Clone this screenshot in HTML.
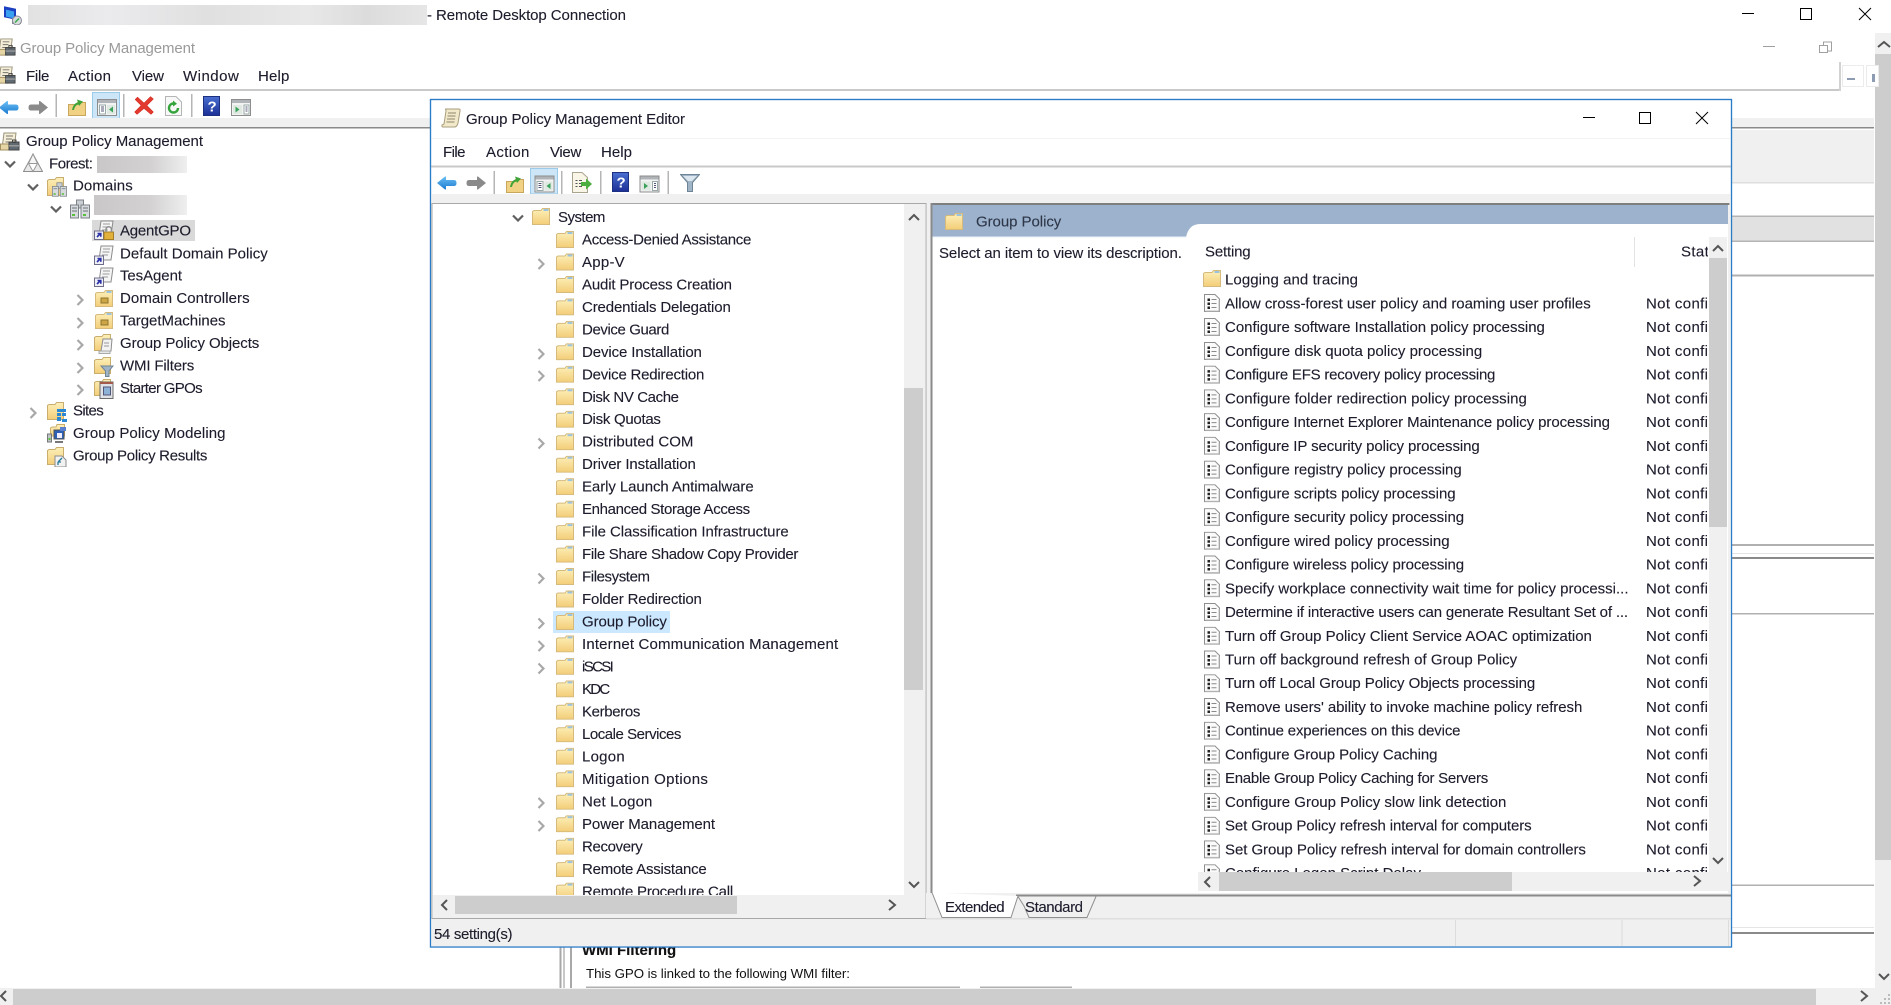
<!DOCTYPE html>
<html><head><meta charset="utf-8"><title>Remote Desktop Connection</title>
<style>
html,body{margin:0;padding:0;background:#fff;overflow:hidden;width:1891px;height:1005px}
svg{display:block;position:absolute;left:0;top:0}
text{font-family:"Liberation Sans",sans-serif;font-size:15px;fill:#1c1c2c;stroke:#1c1c2c;stroke-width:.12px;white-space:pre}
.n{letter-spacing:.35px}
#all{filter:blur(.3px)}
</style></head><body>
<svg width="1891" height="1005" viewBox="0 0 1891 1005" xmlns="http://www.w3.org/2000/svg">
<defs>
<linearGradient id="g1" x1="0" y1="0" x2="0" y2="1"><stop offset="0" stop-color="#fdf0ba"/><stop offset="1" stop-color="#f3cd78"/></linearGradient>
<linearGradient id="gb" x1="0" y1="0" x2="0" y2="1"><stop offset="0" stop-color="#6cc0f5"/><stop offset="1" stop-color="#1b7bd0"/></linearGradient>
<linearGradient id="gh" x1="0" y1="0" x2="0" y2="1"><stop offset="0" stop-color="#4a6fd0"/><stop offset="1" stop-color="#1b2f96"/></linearGradient>
<linearGradient id="bl1" x1="0" y1="0" x2="1" y2="0"><stop offset="0" stop-color="#e2e2e2"/><stop offset=".2" stop-color="#ebebee"/><stop offset=".45" stop-color="#e0e0e0"/><stop offset=".7" stop-color="#e8e8e8"/><stop offset=".85" stop-color="#dcdcdc"/><stop offset="1" stop-color="#e6e6e6"/></linearGradient>
<linearGradient id="bl2" x1="0" y1="0" x2="1" y2="0"><stop offset="0" stop-color="#c9c7c7"/><stop offset=".6" stop-color="#d3d1d1"/><stop offset="1" stop-color="#efefef"/></linearGradient>
<clipPath id="cl"><rect x="433" y="204" width="471" height="691"/></clipPath>
<clipPath id="cr"><rect x="1198" y="268" width="511" height="604"/></clipPath>
<clipPath id="cs"><rect x="1640" y="237" width="68" height="635"/></clipPath>

<symbol id="f" viewBox="0 0 18 17"><path d="M.5 16.500V3.500L2 2.500H9L10.500 .5H17.500V16.500Z" fill="url(#g1)" stroke="#d6ba7c"/><rect x="11.500" y="1" width="5" height="2" fill="#9cc3dd"/></symbol>
<symbol id="d" viewBox="0 0 16 18"><path d="M.5 .5H11L15.500 5V17.500H.5Z" fill="#fbfbfb" stroke="#8e8e8e"/><path d="M15 6V17H1.500" fill="none" stroke="#bdbdbd"/><path d="M3.500 4.500h2.500v2.500h-2.500zM3.500 8.500h2.500v2.500h-2.500zM3.500 12.500h2.500v2.500h-2.500z" fill="#222"/><path d="M7.500 5.500h5M7.500 9.500h5M7.500 13.500h5" stroke="#8a8a8a" fill="none"/></symbol>
<symbol id="r" viewBox="0 0 8 12"><path d="M1.500 1L6.500 6L1.500 11" fill="none" stroke="#a8a8a8" stroke-width="2.200"/></symbol>
<symbol id="e" viewBox="0 0 12 8"><path d="M1 1.500L6 6.500L11 1.500" fill="none" stroke="#606060" stroke-width="2.200"/></symbol>
<symbol id="back" viewBox="0 0 20 16"><path d="M0 8L8 1.500Q9 1 9 2.500V5H17Q19.500 5 19.500 8Q19.500 11 17 11H9V13.500Q9 15 8 14.500Z" fill="url(#gb)"/></symbol>
<symbol id="fwd" viewBox="0 0 20 16"><path d="M20 8L12 1.500Q11 1 11 2.500V5H3Q.5 5 .5 8Q.5 11 3 11H11V13.500Q11 15 12 14.500Z" fill="#8a8a8a"/></symbol>
<symbol id="upf" viewBox="0 0 18 18"><path d="M.5 17.500V6.500H8L9.500 4.500H17.500V17.500Z" fill="#f1d184" stroke="#c8a75c"/><path d="M4 12C5 7 7 5 10 4.500L9 1.500L15 3.500L11 8L10.500 6.500C8 7 6.500 9 6 12Z" fill="#3fa43a"/></symbol>
<symbol id="tree" viewBox="0 0 20 17"><rect x=".5" y=".5" width="19" height="16" fill="#f3f3f3" stroke="#8d8d8d"/><rect x="1" y="1" width="18" height="3" fill="#b0b4b8"/><rect x="2.500" y="6" width="6" height="9" fill="#fff" stroke="#9aa"/><path d="M4 8h3M4 10h3M4 12h3" stroke="#557"/><rect x="10" y="6" width="8" height="9" fill="#dfe9e2"/><path d="M16 7.500V13.500L12 10.500Z" fill="#3aa15a"/></symbol>
<symbol id="pane" viewBox="0 0 20 17"><rect x=".5" y=".5" width="19" height="16" fill="#f3f3f3" stroke="#8d8d8d"/><rect x="1" y="1" width="18" height="3" fill="#b0b4b8"/><rect x="2" y="6" width="9" height="9" fill="#dfe9e2"/><path d="M4.500 7.500V13.500L8.500 10.500Z" fill="#3aa15a"/><rect x="13" y="6" width="5" height="9" fill="#fff" stroke="#9aa"/><path d="M14.500 8h2M14.500 10h2M14.500 12h2" stroke="#557"/></symbol>
<symbol id="x" viewBox="0 0 20 19"><path d="M1 3.500L3.500 1L10 7L16.500 .5L19.500 3L13 9.500L19.500 16L17 18.500L10 12.500L3 18.500L.5 16L7 9.500Z" fill="#e23a2e" stroke="#c92820" stroke-width=".5"/></symbol>
<symbol id="ref" viewBox="0 0 17 20"><path d="M.5 .5H11L16.500 6V19.500H.5Z" fill="#f8f8f8" stroke="#b5b5b5"/><path d="M13 12A4.500 4.500 0 1 1 8.500 7.500" fill="none" stroke="#33a33a" stroke-width="2.400"/><path d="M8 4.500L12 7.800L8 10.500Z" fill="#33a33a"/></symbol>
<symbol id="help" viewBox="0 0 17 20"><rect x=".5" y=".5" width="16" height="19" fill="url(#gh)" stroke="#1d2f80"/><text x="4.500" y="15.500" style="font-size:15px;font-weight:bold;fill:#fff;stroke:none">?</text></symbol>
<symbol id="exp" viewBox="0 0 20 21"><path d="M.5 .5H10L15.500 5.500V20.500H.5Z" fill="#f9f6e8" stroke="#a9a48f"/><path d="M3.500 8.500h2M7 8.500h3M3.500 11.500h2M7 11.500h3M3.500 14.500h2M7 14.500h3" stroke="#555"/><path d="M9 10h5V6.500L20 12L14 17.500V14H9Z" fill="#4cae3e"/></symbol>
<symbol id="fil" viewBox="0 0 20 18"><path d="M.5 .5H19.500L12.500 8.500V17.500H7.500V8.500Z" fill="#9fb4c6" stroke="#6f8494"/><path d="M3 2H17L12 7H8Z" fill="#dce6ee"/></symbol>
<symbol id="gpm" viewBox="0 0 20 20"><path d="M4 1H16L14.500 13H2.500Z" fill="#f5efd9" stroke="#9a937c"/><path d="M6 4h7M6 7h6M5.500 10h4" stroke="#77756a"/><rect x=".5" y="12" width="11" height="6" fill="#e6d6a6" stroke="#a29060"/><rect x="9" y="10" width="10" height="8" fill="#5f6a72" stroke="#444"/><rect x="12.500" y="8" width="3.500" height="2.500" fill="none" stroke="#444"/><rect x="9" y="13" width="10" height="1.500" fill="#999"/></symbol>
<symbol id="for" viewBox="0 0 20 20"><path d="M10 1L19.500 18.500H.5Z" fill="#e9e9e9" stroke="#8e8e8e"/><path d="M5.500 10.500H14.500L10 18.500Z" fill="#fff" stroke="#9a9a9a"/><path d="M10 1L5.500 10.500H14.500Z" fill="#f6f6f6" stroke="#9a9a9a"/></symbol>
<symbol id="srv" viewBox="0 0 20 20"><rect x="6.500" y="1" width="7" height="8" fill="#c9ced2" stroke="#7a8288"/><rect x=".5" y="6" width="8" height="13" fill="#d7dbde" stroke="#7a8288"/><rect x="11" y="6" width="8.500" height="13" fill="#d7dbde" stroke="#7a8288"/><path d="M2 9h5M2 12h5M13 9h5M13 12h5" stroke="#6c7378"/><path d="M2 16h3M13 16h3" stroke="#5bbf3e" stroke-width="2"/></symbol>
<symbol id="dom" viewBox="0 0 20 20"><path d="M.5 18.500V3.500L2 2.500H8L9.500 .5H16.500V18.500Z" fill="url(#g1)" stroke="#c9ad6d"/><g transform="translate(5 5) scale(.75)"><rect x="6.500" y="1" width="7" height="8" fill="#c9ced2" stroke="#7a8288"/><rect x=".5" y="6" width="8" height="13" fill="#d7dbde" stroke="#7a8288"/><rect x="11" y="6" width="8.500" height="13" fill="#d7dbde" stroke="#7a8288"/><path d="M2 9h5M13 9h5" stroke="#6c7378"/><path d="M2 16h3M13 16h3" stroke="#5bbf3e" stroke-width="2"/></g></symbol>
<symbol id="gpo" viewBox="0 0 20 20"><path d="M7 1H19L17 15H5Z" fill="#f5f5f5" stroke="#8d8d8d"/><path d="M9 4h7M8.500 7h7M8 10h6" stroke="#9a9a9a"/><rect x=".5" y="11" width="9" height="8.500" fill="#eef0f5" stroke="#6d6d8a"/><path d="M3 17L6.500 13.500M3.500 13.500H6.800V16.800" stroke="#2a2fa8" stroke-width="1.600" fill="none"/></symbol>
<symbol id="gpol" viewBox="0 0 20 20"><use href="#gpo" width="20" height="20"/><rect x="10" y="12" width="9.500" height="7.500" fill="#e2b13c" stroke="#a57d22"/><path d="M12 12V9.500a2.700 2.700 0 0 1 5.400 0V12" fill="none" stroke="#8f8f8f" stroke-width="1.500"/></symbol>
<symbol id="ou" viewBox="0 0 18 17"><use href="#f" width="18" height="17"/><rect x="6" y="8" width="7" height="5" fill="#cda544" stroke="#8f7530"/></symbol>
<symbol id="gpf" viewBox="0 0 20 20"><path d="M.5 16.500V3.500L2 2.500H8L9.500 .5H16.500V16.500Z" fill="url(#g1)" stroke="#c9ad6d"/><path d="M9 5H18L17 17H7Z" fill="#f3f3f3" stroke="#8d8d8d"/><path d="M10 9h5M10 12h5" stroke="#999"/><path d="M5 17H16V19.500H5Z" fill="#e8e8e8" stroke="#aaa"/></symbol>
<symbol id="wmi" viewBox="0 0 20 20"><path d="M.5 16.500V3.500L2 2.500H8L9.500 .5H16.500V16.500Z" fill="url(#g1)" stroke="#c9ad6d"/><path d="M7 9H19L15 14V19.500H11.500V14Z" fill="#9fb4c6" stroke="#6f8494"/></symbol>
<symbol id="sta" viewBox="0 0 20 20"><path d="M.5 16.500V3.500L2 2.500H8L9.500 .5H16.500V16.500Z" fill="url(#g1)" stroke="#c9ad6d"/><rect x="6" y="3" width="13" height="16.500" fill="#dfe3e8" stroke="#6c6c6c"/><rect x="6" y="3" width="13" height="2" fill="#a65a4a"/><rect x="9.500" y="8" width="7" height="8" fill="#8db2d8" stroke="#557"/></symbol>
<symbol id="sit" viewBox="0 0 20 20"><path d="M.5 17.500V3.500L2 2.500H8L9.500 .5H16.500V17.500Z" fill="url(#g1)" stroke="#c9ad6d"/><path d="M10 7h9v3h-9zM10 11h4v3h-4zM15 11h4v3h-4zM10 15h4v4h-4zM15 17h5v3h-5z" fill="#2a88d4"/></symbol>
<symbol id="mod" viewBox="0 0 20 20"><path d="M3.500 14V4L5 3H9L10 .5H17.500V12H3.500Z" fill="url(#g1)" stroke="#c9ad6d"/><rect x=".5" y="10" width="4" height="8" fill="#bfc4c8" stroke="#777"/><rect x="7" y="6" width="10" height="9" fill="#2b5fb8" stroke="#555"/><rect x="10" y="9" width="5" height="5" fill="#eef"/><path d="M8 18h8" stroke="#777" stroke-width="2"/><rect x="13" y="3" width="6" height="4" fill="#5a7fcf"/><rect x="1.500" y="14" width="2" height="2" fill="#5bbf3e"/></symbol>
<symbol id="res" viewBox="0 0 20 20"><path d="M.5 17.500V3.500L2 2.500H8L9.500 .5H16.500V17.500Z" fill="url(#g1)" stroke="#c9ad6d"/><path d="M8 9H15L19 13V20H8Z" fill="#f1f1f1" stroke="#8d8d8d"/><path d="M11 15L15 11M11 15H14M11 15V18" stroke="#2a7a9a" fill="none" stroke-width="1.300"/></symbol>
<symbol id="ed" viewBox="0 0 20 20"><path d="M4 1H18Q19.500 1 19 3L17 15Q16.500 18 14 19H2Q.5 19 1 17L3 16L5 3Q5 1 4 1Z" fill="#f2e9cb" stroke="#a99e7c"/><path d="M7 5h8M6.500 8h8M6 11h8M5.500 14h8" stroke="#8d856a"/></symbol>
<symbol id="rdp" viewBox="0 0 20 20"><rect x="1" y="1" width="12" height="11" fill="#1a3fc0" transform="skewY(12)"/><rect x="3" y="4" width="8" height="7" fill="#3aa0f0" transform="skewY(12)"/><rect x="9" y="13" width="9" height="6" fill="#8a8f94"/><circle cx="14" cy="15.500" r="4.500" fill="#d8dcdc" stroke="#889"/><path d="M12 17.500L16 13.500" stroke="#3aa84a" stroke-width="1.500"/></symbol>
</defs>

<g id="all">
<!-- Outer title bar -->
<use href="#rdp" x="3" y="5" width="20" height="20"/>
<rect x="28" y="5" width="399" height="20" fill="url(#bl1)"/>
<text x="427" y="20" textLength="199">- Remote Desktop Connection</text>
<path d="M1742 13.500h12M1800.500 8.500h11v11h-11zM1859 8l12 12M1871 8l-12 12" stroke="#000" fill="none" stroke-width="1"/>

<!-- Inner GPMC title -->
<use href="#gpm" x="-3" y="38" width="19" height="19"/>
<text x="20" y="53" textLength="175" style="fill:#9a9a9a;stroke:none">Group Policy Management</text>
<path d="M1763 46.500h12" stroke="#a0a0a0" stroke-width="1"/>
<path d="M1823.500 45.500v-3.500h8v9h-4M1819.500 45.500h8v7h-8z" stroke="#a0a0a0" fill="none"/>
<rect x="1875" y="33" width="16" height="955" fill="#f0f0f0"/>
<rect x="1875" y="54" width="16" height="806" fill="#cdcdcd"/>
<path d="M1878 47l6-5l6 5" fill="none" stroke="#555" stroke-width="2"/>
<path d="M1879 974l5 5l5-5" fill="none" stroke="#555" stroke-width="2"/>

<!-- Menu -->
<use href="#gpm" x="-3" y="66" width="19" height="19"/>
<text x="26" y="81" textLength="23.400">File</text><text x="68" y="81" textLength="43">Action</text><text x="132" y="81" textLength="32">View</text><text x="183" y="81" textLength="55.800">Window</text><text x="258" y="81" textLength="31.400">Help</text>
<rect x="0" y="89" width="1840" height="2" fill="#c9c9c9"/>
<rect x="1839" y="62" width="2" height="29" fill="#d2d2d2"/>
<rect x="1842.500" y="65.500" width="21" height="21" fill="#fff" stroke="#ececec"/>
<rect x="1847" y="78" width="8" height="2" fill="#8d9cb3"/>
<rect x="1866.500" y="65.500" width="12" height="21" fill="#fff" stroke="#ececec"/>
<rect x="1872" y="74" width="3" height="8" fill="#8d9cb3"/>

<!-- Main toolbar -->
<use href="#back" x="-1" y="99.500" width="20" height="16"/>
<use href="#fwd" x="28" y="99.500" width="20" height="16"/>
<rect x="55.500" y="94" width="1.500" height="23" fill="#b5b5b5"/>
<use href="#upf" x="68" y="98" width="18" height="18"/>
<rect x="92.500" y="92.500" width="27" height="26" fill="#cce6f8" stroke="#9ccbea"/>
<use href="#tree" x="97" y="99" width="20" height="17"/>
<rect x="123" y="94" width="1.500" height="23" fill="#b5b5b5"/>
<use href="#x" x="134" y="96" width="20" height="19"/>
<use href="#ref" x="165" y="96" width="17" height="20"/>
<rect x="191" y="94" width="1.500" height="23" fill="#b5b5b5"/>
<use href="#help" x="203" y="96" width="17" height="20"/>
<use href="#pane" x="231" y="99" width="20" height="17"/>
<rect x="0" y="118" width="1874" height="9" fill="#f0f0f0"/>
<rect x="0" y="127" width="1874" height="1.500" fill="#8a8a8a"/>

<!-- Main tree -->
<use href="#gpm" x="0" y="132" width="20" height="20"/>
<text x="26" y="146" textLength="177">Group Policy Management</text>
<use href="#e" x="4" y="160" width="12" height="8"/>
<use href="#for" x="23" y="153" width="20" height="20"/>
<text x="49" y="168.500" textLength="43.900">Forest:</text>
<rect x="97" y="156" width="90" height="17" fill="url(#bl2)"/>
<use href="#e" x="27" y="183" width="12" height="8"/>
<use href="#dom" x="47" y="177" width="20" height="20"/>
<text x="73" y="190.600" textLength="59.700">Domains</text>
<use href="#e" x="50" y="205" width="12" height="8"/>
<use href="#srv" x="70" y="199" width="20" height="20"/>
<rect x="94" y="195" width="93" height="20" fill="url(#bl2)"/>
<rect x="92" y="220" width="103" height="21" fill="#d9d9d9"/>
<use href="#gpol" x="94" y="220" width="20" height="20"/>
<text x="120" y="235.700" textLength="71">AgentGPO</text>
<use href="#gpo" x="94" y="245" width="20" height="20"/>
<text x="120" y="258.300" textLength="147.700">Default Domain Policy</text>
<use href="#gpo" x="94" y="267" width="20" height="20"/>
<text x="120" y="280.700" textLength="62">TesAgent</text>
<use href="#r" x="76" y="294" width="8" height="12"/><use href="#ou" x="95" y="290" width="18" height="17"/>
<text x="120" y="303.200" textLength="129.600">Domain Controllers</text>
<use href="#r" x="76" y="317" width="8" height="12"/><use href="#ou" x="95" y="312" width="18" height="17"/>
<text x="120" y="325.700" textLength="105.500">TargetMachines</text>
<use href="#r" x="76" y="339" width="8" height="12"/><use href="#gpf" x="94" y="334" width="20" height="20"/>
<text x="120" y="348.200" textLength="139.300">Group Policy Objects</text>
<use href="#r" x="76" y="362" width="8" height="12"/><use href="#wmi" x="94" y="357" width="20" height="20"/>
<text x="120" y="370.700" textLength="74.200">WMI Filters</text>
<use href="#r" x="76" y="384" width="8" height="12"/><use href="#sta" x="94" y="379" width="20" height="20"/>
<text x="120" y="393.200" textLength="82.600">Starter GPOs</text>
<use href="#r" x="29" y="407" width="8" height="12"/><use href="#sit" x="47" y="402" width="20" height="20"/>
<text x="73" y="415.700" textLength="30.700">Sites</text>
<use href="#mod" x="47" y="424" width="20" height="20"/>
<text x="73" y="438.200" textLength="152.500">Group Policy Modeling</text>
<use href="#res" x="47" y="447" width="20" height="20"/>
<text x="73" y="460.700" textLength="134.400">Group Policy Results</text>

<!-- Right background behind editor -->
<rect x="1732" y="130" width="142" height="52" fill="#f0f0f0"/>
<rect x="1732" y="182" width="142" height="1.500" fill="#dedede"/>
<rect x="1732" y="216" width="142" height="26" fill="#e1e1e1"/>
<rect x="1732" y="215.500" width="142" height="1.500" fill="#b5b5b5"/>
<rect x="1732" y="240.500" width="142" height="1.500" fill="#b5b5b5"/>
<rect x="1732" y="274.500" width="142" height="2" fill="#b0b0b0"/>
<rect x="1732" y="544" width="142" height="2" fill="#b0b0b0"/>
<rect x="1732" y="553" width="142" height="1" fill="#e5e5e5"/>
<rect x="1732" y="557" width="142" height="2" fill="#8a8a8a"/>
<rect x="1732" y="613" width="142" height="1.500" fill="#b0b0b0"/>
<rect x="1732" y="884.500" width="142" height="1.500" fill="#b0b0b0"/>
<rect x="1732" y="927" width="142" height="1" fill="#e5e5e5"/>
<rect x="1732" y="932" width="142" height="2" fill="#8a8a8a"/>

<!-- Under editor -->
<rect x="559.500" y="947" width="2" height="41" fill="#a8a8a8"/>
<rect x="563" y="947" width="2" height="41" fill="#c8c8c8"/>
<rect x="570" y="947" width="2" height="41" fill="#a8a8a8"/>
<text x="582" y="955" style="font-weight:bold;fill:#111">WMI Filtering</text>
<text x="586" y="978" textLength="264" style="font-size:13.300px;fill:#111;stroke:none">This GPO is linked to the following WMI filter:</text>
<rect x="586" y="986.500" width="374" height="1.500" fill="#b0b0b0"/>
<rect x="980" y="986.500" width="92" height="1.500" fill="#b0b0b0"/>

<!-- Outer h scrollbar -->
<rect x="0" y="988" width="1891" height="17" fill="#f0f0f0"/>
<rect x="13" y="989" width="1803" height="16" fill="#cdcdcd"/>
<path d="M6 991l-5 5l5 5" fill="none" stroke="#555" stroke-width="2"/>
<path d="M1861 991l6 5l-6 5" fill="none" stroke="#555" stroke-width="2"/>
<path d="M1888 994h2v2h-2zM1884 998h2v2h-2zM1888 998h2v2h-2zM1880 1002h2v2h-2zM1884 1002h2v2h-2zM1888 1002h2v2h-2z" fill="#bbb"/>

<!-- Editor window -->
<rect x="430.500" y="99.500" width="1301" height="847.500" fill="#fff" stroke="#2a7cc7" stroke-width="1.200"/>
<use href="#ed" x="441" y="108" width="20" height="20"/>
<text x="466" y="124" textLength="219">Group Policy Management Editor</text>
<path d="M1583 117.500h12M1639.500 112.500h11v11h-11zM1696 112l12 12M1708 112l-12 12" stroke="#000" fill="none"/>
<rect x="431" y="138" width="1300" height="1" fill="#f3f3f3"/>
<text x="443" y="157" textLength="22.500">File</text><text x="486" y="157" textLength="43.400">Action</text><text x="550" y="157" textLength="31.300">View</text><text x="601" y="157" textLength="31">Help</text>
<rect x="431" y="165.500" width="1300" height="2" fill="#c9c9c9"/>
<use href="#back" x="437" y="175" width="20" height="16"/>
<use href="#fwd" x="466" y="175" width="20" height="16"/>
<rect x="493.500" y="171" width="1.500" height="23" fill="#b5b5b5"/>
<use href="#upf" x="506" y="175" width="18" height="18"/>
<rect x="530.500" y="168.500" width="27" height="25.500" fill="#cce6f8" stroke="#9ccbea"/>
<use href="#tree" x="534.500" y="175.500" width="20" height="17"/>
<rect x="561" y="171" width="1.500" height="23" fill="#b5b5b5"/>
<use href="#exp" x="572" y="172" width="20" height="21"/>
<rect x="600" y="171" width="1.500" height="23" fill="#b5b5b5"/>
<use href="#help" x="612" y="172" width="17" height="20"/>
<use href="#pane" x="639.500" y="175.500" width="20" height="17"/>
<rect x="667.500" y="171" width="1.500" height="23" fill="#b5b5b5"/>
<use href="#fil" x="680" y="174" width="20" height="18"/>
<rect x="431" y="194" width="1300" height="9" fill="#f0f0f0"/>

<!-- Left pane -->
<rect x="431" y="203" width="500" height="744" fill="#f0f0f0"/>
<rect x="432" y="203.500" width="494" height="715" fill="#fff" stroke="#a8a8a8"/>
<rect x="904" y="204" width="21" height="691" fill="#f0f0f0"/>
<rect x="904" y="388" width="19" height="302" fill="#cdcdcd"/>
<path d="M909 220l5-5l5 5" fill="none" stroke="#555" stroke-width="2"/>
<path d="M909 882l5 5l5-5" fill="none" stroke="#555" stroke-width="2"/>
<rect x="433" y="895" width="492" height="23" fill="#f0f0f0"/>
<rect x="455" y="896" width="282" height="18" fill="#cdcdcd"/>
<path d="M447 900l-5 5l5 5" fill="none" stroke="#555" stroke-width="2"/>
<path d="M889 900l6 5l-6 5" fill="none" stroke="#555" stroke-width="2"/>

<g clip-path="url(#cl)">
<rect x="553" y="611" width="117" height="22" fill="#cce8ff"/>
<use href="#e" x="512" y="214" width="12" height="8"/><use href="#f" x="532" y="208" width="18" height="17"/><text x="558" y="222" textLength="47.400">System</text>
<use href="#f" x="556" y="231" width="18" height="17"/><text x="582" y="244.500" textLength="169.300">Access-Denied Assistance</text>
<use href="#r" x="537" y="258" width="8" height="12"/><use href="#f" x="556" y="253.500" width="18" height="17"/><text x="582" y="267" textLength="42.700">App-V</text>
<use href="#f" x="556" y="276" width="18" height="17"/><text x="582" y="289.400" textLength="150">Audit Process Creation</text>
<use href="#f" x="556" y="298.400" width="18" height="17"/><text x="582" y="311.900" textLength="148.800">Credentials Delegation</text>
<use href="#f" x="556" y="320.900" width="18" height="17"/><text x="582" y="334.400" textLength="87.300">Device Guard</text>
<use href="#r" x="537" y="348" width="8" height="12"/><use href="#f" x="556" y="343.300" width="18" height="17"/><text x="582" y="356.800" textLength="119.900">Device Installation</text>
<use href="#r" x="537" y="370" width="8" height="12"/><use href="#f" x="556" y="365.800" width="18" height="17"/><text x="582" y="379.300" textLength="122.300">Device Redirection</text>
<use href="#f" x="556" y="388.300" width="18" height="17"/><text x="582" y="401.800" textLength="97">Disk NV Cache</text>
<use href="#f" x="556" y="410.700" width="18" height="17"/><text x="582" y="424.200" textLength="78.900">Disk Quotas</text>
<use href="#r" x="537" y="437.500" width="8" height="12"/><use href="#f" x="556" y="433.200" width="18" height="17"/><text x="582" y="446.700" textLength="111.400">Distributed COM</text>
<use href="#f" x="556" y="455.700" width="18" height="17"/><text x="582" y="469.200" textLength="113.800">Driver Installation</text>
<use href="#f" x="556" y="478.100" width="18" height="17"/><text x="582" y="491.600" textLength="171.700">Early Launch Antimalware</text>
<use href="#f" x="556" y="500.600" width="18" height="17"/><text x="582" y="514.100" textLength="168.100">Enhanced Storage Access</text>
<use href="#f" x="556" y="523.100" width="18" height="17"/><text x="582" y="536.600" textLength="206.700">File Classification Infrastructure</text>
<use href="#f" x="556" y="545.600" width="18" height="17"/><text x="582" y="559.100" textLength="216.400">File Share Shadow Copy Provider</text>
<use href="#r" x="537" y="572.500" width="8" height="12"/><use href="#f" x="556" y="568" width="18" height="17"/><text x="582" y="581.500" textLength="68">Filesystem</text>
<use href="#f" x="556" y="590.500" width="18" height="17"/><text x="582" y="604" textLength="119.900">Folder Redirection</text>
<use href="#r" x="537" y="617.500" width="8" height="12"/><use href="#f" x="556" y="613" width="18" height="17"/><text x="582" y="626.500" textLength="84.900">Group Policy</text>
<use href="#r" x="537" y="640" width="8" height="12"/><use href="#f" x="556" y="635.400" width="18" height="17"/><text x="582" y="648.900" textLength="256.200">Internet Communication Management</text>
<use href="#r" x="537" y="662.500" width="8" height="12"/><use href="#f" x="556" y="657.900" width="18" height="17"/><text x="582" y="671.400" textLength="31.800">iSCSI</text>
<use href="#f" x="556" y="680.400" width="18" height="17"/><text x="582" y="693.900" textLength="28.200">KDC</text>
<use href="#f" x="556" y="702.800" width="18" height="17"/><text x="582" y="716.300" textLength="58.400">Kerberos</text>
<use href="#f" x="556" y="725.300" width="18" height="17"/><text x="582" y="738.800" textLength="99.400">Locale Services</text>
<use href="#f" x="556" y="747.800" width="18" height="17"/><text x="582" y="761.300" textLength="42.700">Logon</text>
<use href="#f" x="556" y="770.300" width="18" height="17"/><text x="582" y="783.800" textLength="125.900">Mitigation Options</text>
<use href="#r" x="537" y="797" width="8" height="12"/><use href="#f" x="556" y="792.700" width="18" height="17"/><text x="582" y="806.500" textLength="70.400">Net Logon</text>
<use href="#r" x="537" y="820" width="8" height="12"/><use href="#f" x="556" y="815.200" width="18" height="17"/><text x="582" y="829" textLength="133.100">Power Management</text>
<use href="#f" x="556" y="837.700" width="18" height="17"/><text x="582" y="851.500" textLength="60.800">Recovery</text>
<use href="#f" x="556" y="860.100" width="18" height="17"/><text x="582" y="874" textLength="124.700">Remote Assistance</text>
<use href="#f" x="556" y="882.600" width="18" height="17"/><text x="582" y="896.400" textLength="151.200">Remote Procedure Call</text>
</g>

<!-- Right pane -->
<rect x="930.500" y="203" width="799" height="2" fill="#7f7f7f"/>
<rect x="930.500" y="203" width="2" height="692" fill="#8a8a8a"/>
<rect x="932.500" y="205" width="796" height="32" fill="#9db3cd"/>
<path d="M1186 237Q1189 224 1200 224H1728V237Z" fill="#fff"/>
<rect x="932.500" y="236.500" width="254" height="1" fill="#eaf0f6"/>
<rect x="1728" y="205" width="3" height="690" fill="#f0f0f0"/>
<use href="#f" x="945" y="213" width="18" height="17"/>
<text x="976" y="226.500" textLength="85.300" style="fill:#2e3648;stroke:#2e3648">Group Policy</text>
<text x="939" y="258" textLength="242.900">Select an item to view its description.</text>
<text x="1205" y="256.600" textLength="45.600">Setting</text>
<rect x="1634" y="237" width="1" height="30" fill="#e2e2e2"/>
<g clip-path="url(#cs)"><text x="1681" y="256.500" class="n">Status</text></g>
<rect x="1709" y="237" width="18" height="635" fill="#f0f0f0"/>
<rect x="1709" y="258" width="18" height="269" fill="#cdcdcd"/>
<path d="M1713 251l5-5l5 5" fill="none" stroke="#555" stroke-width="2"/>
<path d="M1713 858l5 5l5-5" fill="none" stroke="#555" stroke-width="2"/>
<rect x="1198" y="872" width="530" height="19" fill="#f0f0f0"/>
<rect x="1219" y="872" width="293" height="19" fill="#cdcdcd"/>
<path d="M1210 877l-5 5l5 5" fill="none" stroke="#555" stroke-width="2"/>
<path d="M1694 876l6 5l-6 5" fill="none" stroke="#555" stroke-width="2"/>

<use href="#f" x="1203" y="270" width="18" height="17"/>
<text x="1225" y="284.700" textLength="133">Logging and tracing</text>
<g clip-path="url(#cr)">
<use href="#d" x="1204" y="294" width="16" height="18"/><text x="1225" y="308.400" textLength="365.700">Allow cross-forest user policy and roaming user profiles</text>
<use href="#d" x="1204" y="318" width="16" height="18"/><text x="1225" y="332.100" textLength="319.900">Configure software Installation policy processing</text>
<use href="#d" x="1204" y="342" width="16" height="18"/><text x="1225" y="355.900" textLength="257.200">Configure disk quota policy processing</text>
<use href="#d" x="1204" y="365.600" width="16" height="18"/><text x="1225" y="379.600" textLength="270.400">Configure EFS recovery policy processing</text>
<use href="#d" x="1204" y="389.400" width="16" height="18"/><text x="1225" y="403.400" textLength="301.800">Configure folder redirection policy processing</text>
<use href="#d" x="1204" y="413.100" width="16" height="18"/><text x="1225" y="427.100" textLength="385">Configure Internet Explorer Maintenance policy processing</text>
<use href="#d" x="1204" y="436.800" width="16" height="18"/><text x="1225" y="450.800" textLength="254.700">Configure IP security policy processing</text>
<use href="#d" x="1204" y="460.600" width="16" height="18"/><text x="1225" y="474.600" textLength="236.700">Configure registry policy processing</text>
<use href="#d" x="1204" y="484.300" width="16" height="18"/><text x="1225" y="498.300" textLength="230.600">Configure scripts policy processing</text>
<use href="#d" x="1204" y="508.100" width="16" height="18"/><text x="1225" y="522.100" textLength="239.100">Configure security policy processing</text>
<use href="#d" x="1204" y="531.800" width="16" height="18"/><text x="1225" y="545.800" textLength="224.600">Configure wired policy processing</text>
<use href="#d" x="1204" y="555.500" width="16" height="18"/><text x="1225" y="569.500" textLength="239.100">Configure wireless policy processing</text>
<use href="#d" x="1204" y="579.300" width="16" height="18"/><text x="1225" y="593.300" textLength="403.500">Specify workplace connectivity wait time for policy processi...</text>
<use href="#d" x="1204" y="603" width="16" height="18"/><text x="1225" y="617" textLength="403">Determine if interactive users can generate Resultant Set of ...</text>
<use href="#d" x="1204" y="626.800" width="16" height="18"/><text x="1225" y="640.800" textLength="366.900">Turn off Group Policy Client Service AOAC optimization</text>
<use href="#d" x="1204" y="650.500" width="16" height="18"/><text x="1225" y="664.500" textLength="292.100">Turn off background refresh of Group Policy</text>
<use href="#d" x="1204" y="674.200" width="16" height="18"/><text x="1225" y="688.200" textLength="310.200">Turn off Local Group Policy Objects processing</text>
<use href="#d" x="1204" y="698" width="16" height="18"/><text x="1225" y="712" textLength="357.300">Remove users' ability to invoke machine policy refresh</text>
<use href="#d" x="1204" y="721.700" width="16" height="18"/><text x="1225" y="735.700" textLength="235.500">Continue experiences on this device</text>
<use href="#d" x="1204" y="745.500" width="16" height="18"/><text x="1225" y="759.500" textLength="212.500">Configure Group Policy Caching</text>
<use href="#d" x="1204" y="769.200" width="16" height="18"/><text x="1225" y="783.200" textLength="263.200">Enable Group Policy Caching for Servers</text>
<use href="#d" x="1204" y="792.900" width="16" height="18"/><text x="1225" y="806.900" textLength="281.300">Configure Group Policy slow link detection</text>
<use href="#d" x="1204" y="816.700" width="16" height="18"/><text x="1225" y="830.700" textLength="306.600">Set Group Policy refresh interval for computers</text>
<use href="#d" x="1204" y="840.400" width="16" height="18"/><text x="1225" y="854.400" textLength="360.900">Set Group Policy refresh interval for domain controllers</text>
<use href="#d" x="1204" y="864.200" width="16" height="18"/><text x="1225" y="878.200">Configure Logon Script Delay</text>
</g>
<g clip-path="url(#cs)" class="n">
<text x="1646" y="308.400">Not configured</text><text x="1646" y="332.100">Not configured</text><text x="1646" y="355.900">Not configured</text><text x="1646" y="379.600">Not configured</text><text x="1646" y="403.400">Not configured</text><text x="1646" y="427.100">Not configured</text><text x="1646" y="450.800">Not configured</text><text x="1646" y="474.600">Not configured</text><text x="1646" y="498.300">Not configured</text><text x="1646" y="522.100">Not configured</text><text x="1646" y="545.800">Not configured</text><text x="1646" y="569.500">Not configured</text><text x="1646" y="593.300">Not configured</text><text x="1646" y="617">Not configured</text><text x="1646" y="640.800">Not configured</text><text x="1646" y="664.500">Not configured</text><text x="1646" y="688.200">Not configured</text><text x="1646" y="712">Not configured</text><text x="1646" y="735.700">Not configured</text><text x="1646" y="759.500">Not configured</text><text x="1646" y="783.200">Not configured</text><text x="1646" y="806.900">Not configured</text><text x="1646" y="830.700">Not configured</text><text x="1646" y="854.400">Not configured</text><text x="1646" y="878.200">Not configured</text>
</g>

<!-- Tab strip -->
<rect x="926" y="893" width="805" height="26" fill="#f0f0f0"/>
<rect x="1016" y="894.500" width="715" height="2" fill="#8a8a8a"/>
<rect x="926" y="918" width="805" height="1.500" fill="#dedede"/>
<path d="M1018 896.500L1024 906L1029 917.500H1087L1096 896.500" fill="#f0f0f0" stroke="#8f8f8f"/>
<path d="M932 892.500L942 917.500H1011L1018 896" fill="#fff" stroke="#8f8f8f"/>
<text x="945" y="912" textLength="59.600">Extended</text>
<text x="1025" y="912" textLength="58">Standard</text>

<!-- Status bar -->
<rect x="431" y="919.500" width="1300" height="27" fill="#f0f0f0"/>
<text x="434" y="939" textLength="78.500">54 setting(s)</text>
<rect x="1455" y="920" width="1" height="26" fill="#dcdcdc"/>
<rect x="1621.500" y="920" width="1" height="26" fill="#dcdcdc"/>
<rect x="1728" y="920" width="1" height="26" fill="#dcdcdc"/>
<rect x="430.500" y="99.500" width="1301" height="847.500" fill="none" stroke="#2a7cc7" stroke-width="1.200"/>
</g>
</svg>
</body></html>
